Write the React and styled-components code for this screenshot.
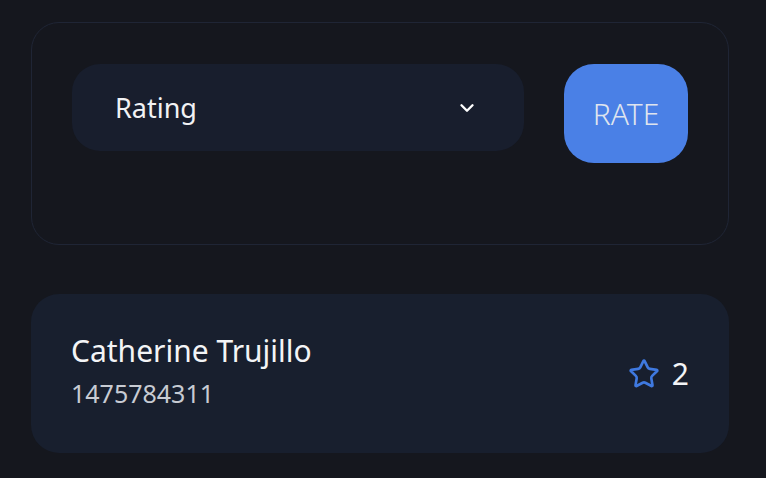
import React from "react";
import styled, { createGlobalStyle } from "styled-components";
import { ChevronDown, Star } from "lucide-react";

const GlobalStyle = createGlobalStyle`
  html, body {
    margin: 0;
    padding: 0;
    background: #15171e;
  }
  body {
    font-family: "Noto Sans", "Open Sans", sans-serif;
    color: #f3f4f6;
  }
`;

function App() {
  return (
    <Page>
      <GlobalStyle />
      <RatePanel>
        <Select>
          <span>Rating</span>
          <ChevronDown size={22} strokeWidth={2.6} color="#ffffff" />
        </Select>
        <RateButton>RATE</RateButton>
      </RatePanel>
      <ContactCard>
        <Info>
          <Name>Catherine Trujillo</Name>
          <Phone>1475784311</Phone>
        </Info>
        <Score>
          <Star size={32} strokeWidth={2} color="#3f79e0" />
          <span>2</span>
        </Score>
      </ContactCard>
    </Page>
  );
}

export default App;

const Page = styled.div`
  padding: 22px 37px 0 31px;
  display: flex;
  flex-direction: column;
  gap: 49px;
`;

const RatePanel = styled.section`
  border: 1px solid #1f2535;
  border-radius: 28px;
  padding: 41px 40px 81px 40px;
  display: flex;
  align-items: flex-start;
  gap: 40px;
`;

const Select = styled.div`
  flex: 1;
  height: 87px;
  background: #181e2d;
  border-radius: 28px;
  padding: 0 46px 0 43px;
  display: flex;
  align-items: center;
  justify-content: space-between;
  font-size: 27px;
  color: #f1f2f4;
`;

const RateButton = styled.button`
  width: 124px;
  height: 99px;
  border: none;
  border-radius: 30px;
  background: #4a80e6;
  color: #dfe4ee;
  font-family: inherit;
  font-size: 30px;
  font-weight: 300;
  padding: 0;
  cursor: pointer;
`;

const ContactCard = styled.section`
  height: 159px;
  background: #181f2e;
  border-radius: 28px;
  padding: 0 40px;
  display: flex;
  align-items: center;
  justify-content: space-between;
`;

const Info = styled.div`
  display: flex;
  flex-direction: column;
  gap: 5px;
  padding-bottom: 6px;
`;

const Name = styled.div`
  font-size: 30px;
  line-height: 40px;
  color: #f3f4f6;
`;

const Phone = styled.div`
  font-size: 25px;
  line-height: 34px;
  color: #c7cbd3;
`;

const Score = styled.div`
  display: flex;
  align-items: center;
  gap: 12px;
  font-size: 30px;
  color: #f3f4f6;
`;
